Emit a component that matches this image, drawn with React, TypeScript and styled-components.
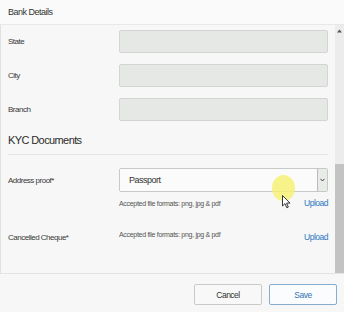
import React from 'react';
import styled, { createGlobalStyle } from 'styled-components';

const GlobalStyle = createGlobalStyle`
  html, body {
    margin: 0;
    padding: 0;
    background: #f6f7f6;
    font-family: 'Liberation Sans', Arial, sans-serif;
  }
`;

const Modal = styled.div`
  position: relative;
  width: 344px;
  height: 312px;
  display: flex;
  flex-direction: column;
  background: #f6f7f6;
  overflow: hidden;
`;

const Header = styled.div`
  height: 24px;
  flex: none;
  display: flex;
  align-items: center;
  padding: 0 8px;
  background: #f9faf9;
  border-bottom: 1px solid #e7e9e7;
  font-size: 9px;
  letter-spacing: -0.5px;
  color: #333;
`;

const Body = styled.div`
  flex: 1;
  display: flex;
  border-left: 1px solid #dfe2df;
  min-height: 0;
`;

const Content = styled.div`
  flex: 1;
  padding: 5px 7px 0 7px;
  display: flex;
  flex-direction: column;
`;

const Row = styled.div<{ $mt?: number }>`
  display: grid;
  grid-template-columns: 111px 209px;
  align-items: center;
  margin-top: ${(p) => p.$mt ?? 0}px;
`;

const Label = styled.div`
  font-size: 8px;
  letter-spacing: -0.5px;
  color: #3a3a3a;
`;

const Input = styled.div`
  height: 21px;
  background: #e6e8e6;
  border: 1px solid #d2d5d2;
  border-radius: 2px;
`;

const SectionTitle = styled.div`
  margin-top: 12px;
  padding-bottom: 7px;
  border-bottom: 1px solid #e3e5e3;
  width: 320px;
  font-size: 11px;
  line-height: 14px;
  letter-spacing: -0.6px;
  color: #2b2b2b;
`;

const Select = styled.div`
  height: 22px;
  display: flex;
  align-items: stretch;
  background: #fafbfa;
  border: 1px solid #c6c9c6;
  border-radius: 2px;
`;

const SelectValue = styled.div`
  flex: 1;
  display: flex;
  align-items: center;
  padding-left: 9px;
  font-size: 9px;
  letter-spacing: -0.5px;
  color: #333;
`;

const SelectArrow = styled.div`
  width: 9px;
  display: flex;
  align-items: center;
  justify-content: center;
  border-left: 1px solid #b9bcb9;
  background: #e9ebe9;
`;

const Hint = styled.div<{ $mt?: number }>`
  grid-column: 2;
  display: flex;
  align-items: center;
  justify-content: space-between;
  margin-top: ${(p) => p.$mt ?? 0}px;
`;

const Formats = styled.span<{ $shift?: number }>`
  font-size: 7px;
  letter-spacing: -0.3px;
  color: #555;
  position: relative;
  top: ${(p) => p.$shift ?? 0}px;
`;

const UploadLink = styled.span`
  font-size: 8.5px;
  letter-spacing: -0.5px;
  color: #2f77c2;
`;

const Scrollbar = styled.div`
  width: 9px;
  flex: none;
  display: flex;
  flex-direction: column;
  background: #ececec;
`;

const ScrollArrow = styled.div`
  height: 12px;
  display: flex;
  align-items: center;
  justify-content: center;
`;

const ScrollSpace = styled.div`
  flex: 1;
`;

const ScrollThumb = styled.div`
  height: 109px;
  background: #c3c3c3;
`;

const Footer = styled.div`
  height: 39px;
  flex: none;
  display: flex;
  justify-content: flex-end;
  align-items: flex-start;
  gap: 7px;
  padding: 10px 7px 0 0;
  box-sizing: border-box;
  border-top: 1px solid #e2e4e2;
  background: #f6f7f6;
`;

const Button = styled.div<{ $primary?: boolean }>`
  width: 66px;
  height: 19px;
  display: flex;
  align-items: center;
  justify-content: center;
  border: 1px solid ${(p) => (p.$primary ? '#86add0' : '#c8cac8')};
  border-radius: 2px;
  background: ${(p) => (p.$primary ? '#fbfcfd' : '#f8f8f8')};
  color: ${(p) => (p.$primary ? '#3674b5' : '#333')};
  font-size: 8.5px;
  letter-spacing: -0.5px;
`;

const Highlight = styled.div`
  position: absolute;
  left: 272px;
  top: 175px;
  width: 23px;
  height: 26px;
  border-radius: 50%;
  background: rgba(248, 240, 110, 0.8);
`;

const Cursor = styled.svg`
  position: absolute;
  left: 282px;
  top: 195px;
`;

export default function App() {
  return (
    <>
      <GlobalStyle />
      <Modal>
        <Header>Bank Details</Header>
        <Body>
          <Content>
            <Row>
              <Label>State</Label>
              <Input />
            </Row>
            <Row $mt={11}>
              <Label>City</Label>
              <Input />
            </Row>
            <Row $mt={11}>
              <Label>Branch</Label>
              <Input />
            </Row>
            <SectionTitle>KYC Documents</SectionTitle>
            <Row $mt={13}>
              <Label>Address proof*</Label>
              <Select>
                <SelectValue>Passport</SelectValue>
                <SelectArrow>
                  <svg width="5" height="4" viewBox="0 0 5 4">
                    <path d="M0.5 0.8 L2.5 3 L4.5 0.8" fill="none" stroke="#444" strokeWidth="1" />
                  </svg>
                </SelectArrow>
              </Select>
              <Hint $mt={6}>
                <Formats>Accepted file formats: png, jpg &amp; pdf</Formats>
                <UploadLink>Upload</UploadLink>
              </Hint>
            </Row>
            <Row $mt={24}>
              <Label>Cancelled Cheque*</Label>
              <Hint>
                <Formats $shift={-3}>Accepted file formats: png, jpg &amp; pdf</Formats>
                <UploadLink>Upload</UploadLink>
              </Hint>
            </Row>
          </Content>
          <Scrollbar>
            <ScrollArrow>
              <svg width="5" height="4" viewBox="0 0 5 4">
                <path d="M0 3.5 L2.5 0.5 L5 3.5 Z" fill="#555" />
              </svg>
            </ScrollArrow>
            <ScrollSpace />
            <ScrollThumb />
          </Scrollbar>
        </Body>
        <Footer>
          <Button>Cancel</Button>
          <Button $primary>Save</Button>
        </Footer>
        <Highlight />
        <Cursor width="9" height="14" viewBox="0 0 9 14">
          <path d="M0.5 0.5 L0.5 11 L3 8.6 L4.8 12.8 L6.3 12.1 L4.6 8.1 L8 8.1 Z" fill="#fff" stroke="#222" strokeWidth="0.9" strokeLinejoin="round" />
        </Cursor>
      </Modal>
    </>
  );
}
